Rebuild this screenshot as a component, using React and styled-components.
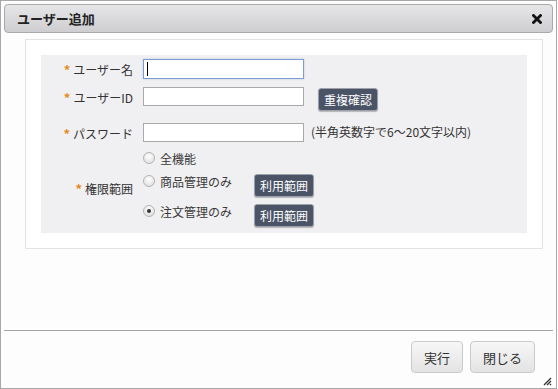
import styled, { createGlobalStyle } from "styled-components";

const GlobalStyle = createGlobalStyle`
  html, body {
    margin: 0;
    padding: 0;
    background: #ffffff;
  }
  body {
    font-family: "Noto Sans CJK JP", "Noto Sans", sans-serif;
    font-size: 12px;
    color: #333;
  }
`;

const Dialog = styled.div`
  position: relative;
  width: 557px;
  height: 389px;
  box-sizing: border-box;
  border: 1px solid #a8a8a8;
  padding: 3px;
  display: flex;
  flex-direction: column;
  background: #fdfdfd;
`;

const TitleBar = styled.div`
  height: 29px;
  box-sizing: border-box;
  border: 1px solid #a9a9a9;
  border-radius: 4px;
  background: linear-gradient(#e6e5e7, #cecdd0);
  display: flex;
  align-items: center;
  justify-content: space-between;
  padding: 0 9px 0 12px;
`;

const Title = styled.span`
  font-weight: bold;
  font-size: 13px;
  color: #222;
`;

const CloseButton = styled.button`
  border: 0;
  background: none;
  padding: 0;
  width: 12px;
  height: 12px;
  display: flex;
  align-items: center;
  justify-content: center;
`;

const Body = styled.div`
  flex: 1;
  padding: 6px 10px 0 21px;
`;

const Panel = styled.div`
  border: 1px solid #e3e3e3;
  background: #fff;
  padding: 15px;
`;

const FormArea = styled.div`
  background: #f0eff1;
  padding: 4px 0 6px;
`;

const Row = styled.div`
  display: flex;
  align-items: ${(p) => (p.$center ? "center" : "flex-start")};
  margin-top: ${(p) => p.$top || 0}px;
`;

const Label = styled.div`
  width: 92px;
  margin-right: 10px;
  height: 20px;
  display: flex;
  align-items: center;
  justify-content: flex-end;
  white-space: nowrap;
`;

const Required = styled.span`
  color: #e8891c;
  margin-right: 3px;
  font-size: 13px;
  font-weight: bold;
`;

const InputWrap = styled.span`
  position: relative;
  display: inline-flex;
`;

const TextInput = styled.input`
  width: 161px;
  height: 20px;
  box-sizing: border-box;
  border: 1px solid ${(p) => (p.$focused ? "#7f9dcc" : "#a9a9a9")};
  box-shadow: ${(p) => (p.$focused ? "0 0 2px #b7c9e6" : "none")};
  background: #fff;
  padding: 0 3px;
  outline: none;
  font-family: inherit;
  font-size: 12px;
`;

const Caret = styled.span`
  position: absolute;
  left: 4px;
  top: 3px;
  width: 1px;
  height: 14px;
  background: #000;
`;

const DarkButton = styled.button`
  margin-left: ${(p) => p.$left || 0}px;
  margin-top: ${(p) => p.$top || 0}px;
  height: 23px;
  box-sizing: border-box;
  padding: 0 5px;
  border: 1px solid #9ca1ab;
  border-radius: 3px;
  background: #4b5467;
  color: #fff;
  font-family: inherit;
  font-size: 12px;
  line-height: 1;
  box-shadow: 0 1px 1px rgba(0, 0, 0, 0.25);
`;

const Hint = styled.span`
  margin-left: 7px;
  line-height: 18px;
  white-space: nowrap;
`;

const Options = styled.div`
  display: flex;
  flex-direction: column;
  gap: 7px;
`;

const Option = styled.div`
  display: flex;
  align-items: flex-start;
`;

const RadioLabel = styled.label`
  width: 111px;
  height: ${(p) => p.$h || 14}px;
  display: flex;
  align-items: center;
  gap: 5px;
  white-space: nowrap;
  color: #3a3a3a;
`;

const Radio = styled.input.attrs({ type: "radio" })`
  appearance: none;
  margin: 0;
  width: 12px;
  height: 12px;
  border-radius: 50%;
  border: 1px solid #b4b4b4;
  background: radial-gradient(circle at 50% 35%, #ffffff, #d9d9d9);
  position: relative;
  flex-shrink: 0;

  &:checked::after {
    content: "";
    position: absolute;
    left: 3px;
    top: 3px;
    width: 4px;
    height: 4px;
    border-radius: 50%;
    background: #333;
  }
`;

const Footer = styled.div`
  height: 55px;
  box-sizing: border-box;
  border-top: 1px solid #a3a3a3;
  display: flex;
  justify-content: flex-end;
  align-items: flex-start;
  gap: 7px;
  padding: 10px 18px 0 0;
`;

const LightButton = styled.button`
  height: 32px;
  padding: 0 12px;
  border: 1px solid #cacaca;
  border-radius: 4px;
  background: linear-gradient(#f7f7f7, #e3e3e3);
  color: #333;
  font-family: inherit;
  font-size: 13px;
`;

const Grip = styled.svg`
  position: absolute;
  right: 4px;
  bottom: 2px;
`;

const CloseIcon = () => (
  <svg width="10" height="10" viewBox="0 0 10 10">
    <path d="M1.5 1.5 L8.5 8.5 M8.5 1.5 L1.5 8.5" stroke="#111" strokeWidth="2.8" strokeLinecap="square" />
  </svg>
);

const App = () => {
  return (
    <>
      <GlobalStyle />
      <Dialog>
        <TitleBar>
          <Title>ユーザー追加</Title>
          <CloseButton>
            <CloseIcon />
          </CloseButton>
        </TitleBar>
        <Body>
          <Panel>
            <FormArea>
              <Row>
                <Label>
                  <Required>*</Required>ユーザー名
                </Label>
                <InputWrap>
                  <TextInput $focused />
                  <Caret />
                </InputWrap>
              </Row>
              <Row $top={8}>
                <Label>
                  <Required>*</Required>ユーザーID
                </Label>
                <TextInput style={{ height: 19 }} />
                <DarkButton $left={14} $top={1}>重複確認</DarkButton>
              </Row>
              <Row $top={12}>
                <Label>
                  <Required>*</Required>パスワード
                </Label>
                <TextInput style={{ height: 19 }} />
                <Hint>(半角英数字で6～20文字以内)</Hint>
              </Row>
              <Row $center $top={6}>
                <Label>
                  <Required>*</Required>権限範囲
                </Label>
                <Options>
                  <Option>
                    <RadioLabel $h={18}>
                      <Radio name="scope" />
                      全機能
                    </RadioLabel>
                  </Option>
                  <Option>
                    <RadioLabel>
                      <Radio name="scope" />
                      商品管理のみ
                    </RadioLabel>
                    <DarkButton>利用範囲</DarkButton>
                  </Option>
                  <Option>
                    <RadioLabel>
                      <Radio name="scope" defaultChecked />
                      注文管理のみ
                    </RadioLabel>
                    <DarkButton>利用範囲</DarkButton>
                  </Option>
                </Options>
              </Row>
            </FormArea>
          </Panel>
        </Body>
        <Footer>
          <LightButton>実行</LightButton>
          <LightButton>閉じる</LightButton>
        </Footer>
        <Grip width="10" height="10" viewBox="0 0 10 10">
          <path d="M9 2 L2 9 M9 5 L5 9 M9 8 L8 9" stroke="#333" strokeWidth="1.3" />
        </Grip>
      </Dialog>
    </>
  );
};

export default App;
